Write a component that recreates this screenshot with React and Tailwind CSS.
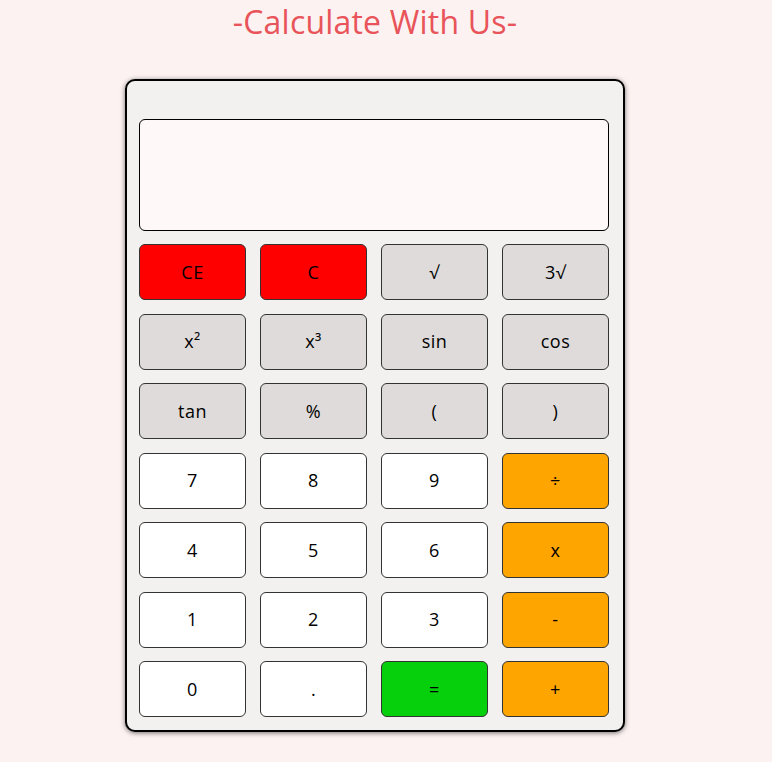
import React from 'react';

const keys = [
  { label: 'CE', tone: 'red' },
  { label: 'C', tone: 'red' },
  { label: '√', tone: 'gray' },
  { label: '3√', tone: 'gray' },
  { label: 'x²', tone: 'gray' },
  { label: 'x³', tone: 'gray' },
  { label: 'sin', tone: 'gray' },
  { label: 'cos', tone: 'gray' },
  { label: 'tan', tone: 'gray' },
  { label: '%', tone: 'gray' },
  { label: '(', tone: 'gray' },
  { label: ')', tone: 'gray' },
  { label: '7', tone: 'white' },
  { label: '8', tone: 'white' },
  { label: '9', tone: 'white' },
  { label: '÷', tone: 'orange' },
  { label: '4', tone: 'white' },
  { label: '5', tone: 'white' },
  { label: '6', tone: 'white' },
  { label: 'x', tone: 'orange' },
  { label: '1', tone: 'white' },
  { label: '2', tone: 'white' },
  { label: '3', tone: 'white' },
  { label: '-', tone: 'orange' },
  { label: '0', tone: 'white' },
  { label: '.', tone: 'white' },
  { label: '=', tone: 'green' },
  { label: '+', tone: 'orange' },
];

const tones = {
  red: 'bg-[#ff0000]',
  gray: 'bg-[#dedbda]',
  white: 'bg-white',
  orange: 'bg-[#ffa500]',
  green: 'bg-[#05d00b]',
};

export default function App() {
  return (
    <div className="min-h-[762px] bg-[#fcf2f1] pr-[22px] font-['Open_Sans',sans-serif] text-black">
      {/* Heading */}
      <h1 className="text-center text-[32px] leading-[44px] tracking-[0.2px] text-[#e8545a]">
        -Calculate With Us-
      </h1>

      {/* Calculator body */}
      <div className="mx-auto mt-[35px] w-[500px] rounded-[10px] border-2 border-black bg-[#f2f1f0] pl-3 pr-[14px] pt-[38px] pb-[13px] shadow-[0_1px_5px_rgba(0,0,0,0.55)]">
        <div className="h-[112px] w-full rounded-[6px] border border-black bg-[#fff8f8]" />

        <div className="mt-[13px] grid grid-cols-4 gap-x-[14px] gap-y-[13.5px]">
          {keys.map((k) => (
            <button
              key={k.label}
              className={`h-[56px] rounded-[6px] border border-[#333] text-[18px] tracking-[0.5px] ${tones[k.tone]}`}
            >
              {k.label}
            </button>
          ))}
        </div>
      </div>
    </div>
  );
}
